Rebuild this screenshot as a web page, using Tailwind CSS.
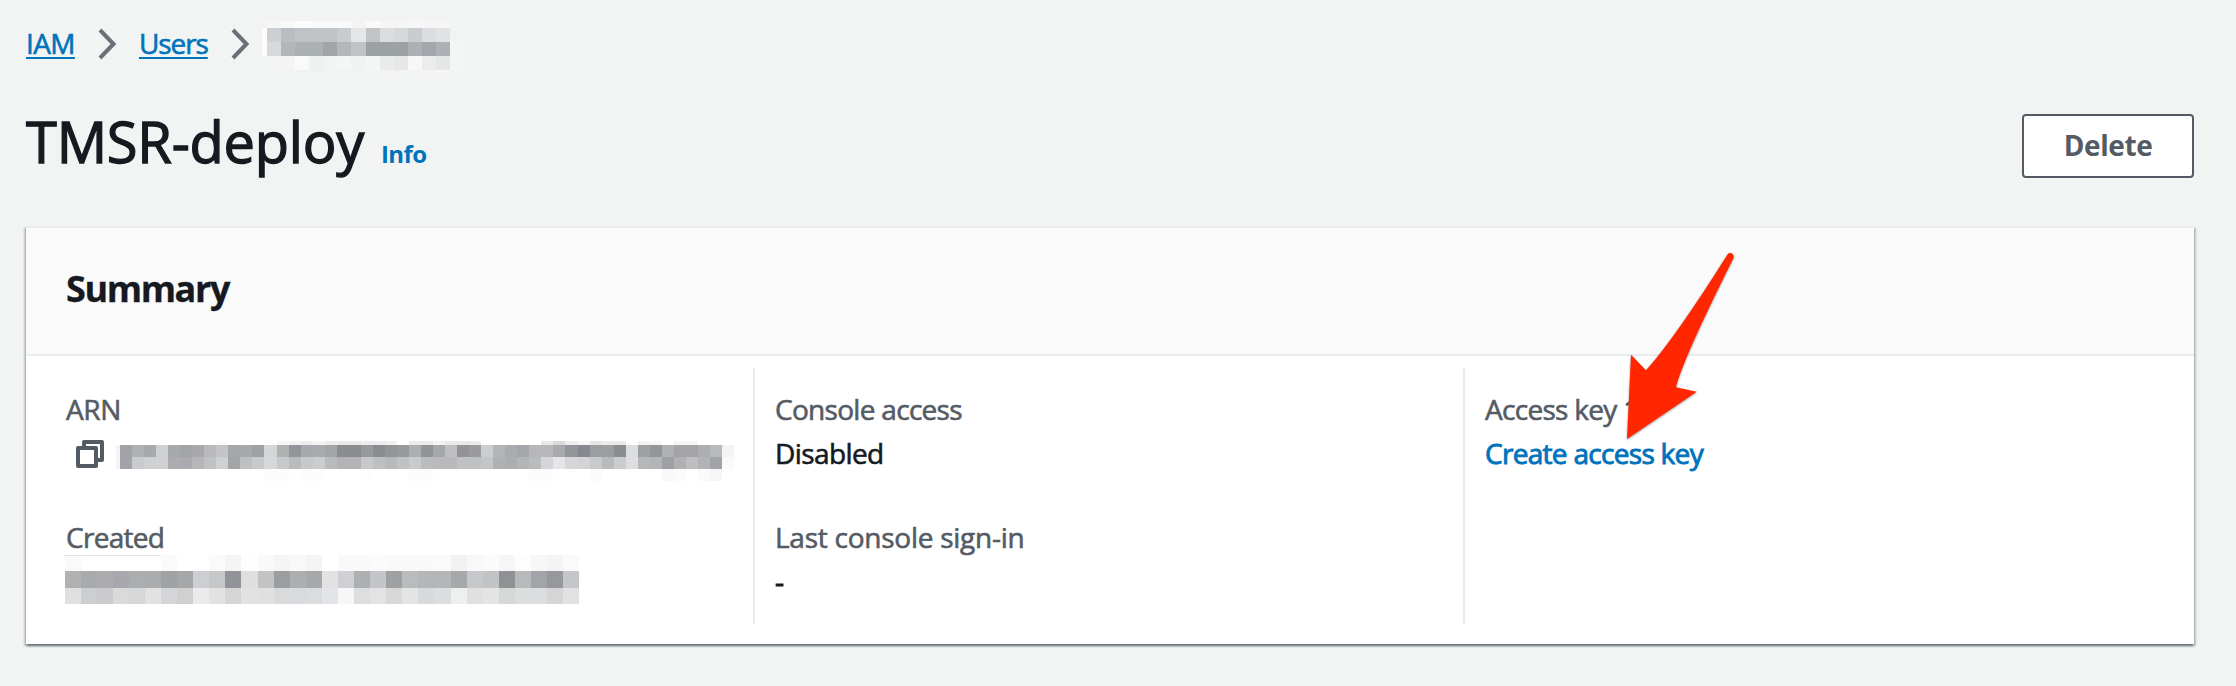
<!DOCTYPE html>
<html lang="en">
<head>
<meta charset="utf-8">
<title>IAM user</title>
<script src="https://cdn.jsdelivr.net/npm/@tailwindcss/browser@4"></script>
</head>
<body class="relative h-[686px] w-[2236px] overflow-hidden bg-[#f2f3f3] font-['Open_Sans','Noto_Sans',sans-serif] text-[28px] leading-[44px] text-[#16191f] [-webkit-text-stroke:0.6px]">
<nav class="flex h-[100px] items-start pl-[26px] pt-[15px]">
  <div class="flex h-[58px] items-center">
    <a class="w-[49px] whitespace-nowrap pb-[2px] tracking-[-0.6px] text-[#0073bb] underline decoration-2 underline-offset-[3px]">IAM</a>
    <svg class="ml-[23px] h-[32px] w-[20px]" viewBox="0 0 20 32" fill="none" stroke="#687078" stroke-width="4"><path d="M2 2 L15.500 16 L2 30"/></svg>
    <a class="ml-[21px] w-[69px] whitespace-nowrap pb-[2px] tracking-[-1.1px] text-[#0073bb] underline decoration-2 underline-offset-[3px]">Users</a>
    <svg class="ml-[23px] h-[32px] w-[20px]" viewBox="0 0 20 32" fill="none" stroke="#687078" stroke-width="4"><path d="M2 2 L15.500 16 L2 30"/></svg>
    <svg id="crumb" class="ml-[11px] h-[58px] w-[204px]" viewBox="262 15 204 58" shape-rendering="crispEdges"></svg>
  </div>
</nav>
<header class="flex h-[126px] items-start justify-between pl-[26px] pr-[42px]">
  <div class="flex items-baseline pt-px">
    <h1 class="w-[355px] whitespace-nowrap text-[56px] leading-[80px] tracking-[-0.2px] [-webkit-text-stroke:1.3px]">TMSR-deploy</h1>
    <a class="text-[24px] font-bold tracking-[-0.6px] text-[#0073bb] [-webkit-text-stroke:0px]">Info</a>
  </div>
  <button class="mt-[14px] h-[64px] w-[172px] rounded-[4px] border-2 border-[#545b64] bg-white pb-[2px] text-[28px] font-bold leading-[56px] tracking-[-0.4px] text-[#545b64] [-webkit-text-stroke:0px]">Delete</button>
</header>
<main class="ml-[26px] h-[418px] w-[2168px] border-t-2 border-[#eaeded] bg-white shadow-[0_2px_2px_0_rgba(0,28,36,0.4),2px_2px_2px_0_rgba(0,28,36,0.18),-2px_2px_2px_0_rgba(0,28,36,0.18)]">
  <div class="h-[128px] border-b-2 border-[#eaeded] bg-[#fafafa] pl-[40px] pt-[41px]">
    <h2 class="text-[36px] font-bold leading-[40px] tracking-[-1.4px] [-webkit-text-stroke:0.3px]">Summary</h2>
  </div>
  <div class="flex pt-[12px]">
    <section class="flex h-[256px] w-[727px] flex-col gap-[40px] pl-[38px] pt-[19px]">
      <div class="h-[88px]">
        <div class="pl-[2px] tracking-[-0.4px] text-[#545b64]">ARN</div>
        <div class="flex h-[44px] items-start">
          <svg class="ml-[12px] mt-[9px] h-[28px] w-[28px]" viewBox="0 0 28 28" fill="none" stroke="#545b64" stroke-width="4" stroke-linejoin="round"><path d="M8 6V2H26V20H22"/><rect x="2" y="8" width="18" height="18"/></svg>
          <svg id="arn" class="ml-[12px] h-[52px] w-[618px]" viewBox="116 431 618 52" shape-rendering="crispEdges"></svg>
        </div>
      </div>
      <div class="h-[88px]">
        <div class="h-[40px] pl-[2px] tracking-[-0.7px] text-[#545b64]">Created</div>
        <svg id="created" class="h-[50px] w-[520px]" viewBox="64 555 520 50" shape-rendering="crispEdges"></svg>
      </div>
    </section>
    <section class="flex h-[256px] w-[710px] flex-col gap-[40px] border-l-2 border-[#eaeded] pl-[20px] pt-[19px]">
      <div>
        <div class="tracking-[-0.7px] text-[#545b64]">Console access</div>
        <div class="tracking-[-0.6px]">Disabled</div>
      </div>
      <div>
        <div class="tracking-[-0.25px] text-[#545b64]">Last console sign-in</div>
        <div class="[-webkit-text-stroke:1px]">-</div>
      </div>
    </section>
    <section class="h-[256px] w-[731px] border-l-2 border-[#eaeded] pl-[20px] pt-[19px]">
      <div class="tracking-[-0.7px] text-[#545b64]">Access key 1</div>
      <a class="tracking-[-0.7px] text-[#0073bb] [-webkit-text-stroke:0.9px]">Create access key</a>
    </section>
  </div>
</main>
<svg class="absolute left-[1600px] top-[240px] h-[220px] w-[160px] drop-shadow-[0_1px_1px_rgba(0,0,0,0.4)]" viewBox="1600 240 160 220"><path fill="#ff2600" d="M1627 439 L1631 354.700 L1646 370.300 Q1675 338 1727.500 254.500 C1730 251 1735 254 1733.500 258 Q1682 361 1676 387.300 L1696.700 391.700 Z"/></svg>
<script>
// Draws a pixelated strip: x, y of the first cell, cell width, then rows of [height, colours].
function mosaic(id, x, y, w, rows) {
  let out = '';
  for (const [h, cells] of rows) {
    cells.trim().split(/\s+/).forEach((c, i) => {
      if (c !== '.') out += `<rect x="${Math.round(x + i * w)}" y="${y}" width="${Math.round(x + (i + 1) * w) - Math.round(x + i * w)}" height="${h}" fill="#${c}"/>`;
    });
    y += h;
  }
  document.getElementById(id).innerHTML += out;
}
document.getElementById('crumb').innerHTML = '<rect x="262" y="28" width="5" height="28" fill="#fcfcfc"/>';
mosaic('crumb', 267, 21, 14.08, [
  [7, 'f6f6f6 f9f9f9 fcfcfc fafafa f9f9f9 f9f9f9 f4f4f4 fafafa f6f6f6 f6f6f6 f7f7f7 f6f6f6 f6f6f6'],
  [14, 'cdd0d3 b9bcc0 c0c3c5 c0c3c5 c0c3c6 c9cccf e5e6e8 c1c5c7 dcdddf d6d9da cacdcf dcdde0 e1e2e4'],
  [14, 'd8d9db b4b6b9 acb1b3 acb1b3 a1a5a8 b3b7ba c0c3c5 9ca1a4 9ca1a4 9ca1a4 adb0b4 a3a6aa aeb0b5 f4f5f5'],
  [14, 'f3f4f4 f4f4f4 f9fbfa eff1f1 f2f3f4 f5f6f6 f1f2f2 f4f5f5 eaeceb e6e8e7 f7f7f7 ebecec e5e6e6 f4f5f5'],
  [9, '. . eff1f0 f1f2f2 . . . . f4f3f3 f1f2f2 . f5f4f4 f6f6f6']
]);
document.getElementById('arn').innerHTML = '<rect x="116" y="445" width="4" height="24" fill="#f4f4f4"/>';
mosaic('arn', 120, 441, 12.04, [
  [4, '. . . . . . . . fafcfb . . . . f5f5f5 f3f3f3 ededed f3f3f3 ededed eaeaea eaeaea ededed eaeced f0f0f0 . ebecec ebecec f3f3f3 eaeaea eaeaea ececec . . . . . e8e8e8 dadada eeeeee f6f6f6 e6e6e6 ebebeb ebebeb . f2f2f2 f6f6f6 . f6f6f6 f6f6f6'],
  [12, 'a2a3a6 b0b1b3 a8a9ab cfd0d2 a8a9ab a3a4a8 a8a9ab bababd c3c4c6 a6a7a9 a8a9ab a0a1a4 d5d7d7 b0b1b3 939499 a8a9ae a9aaad a4a5a8 8b8c90 8b8c90 98999d 8b8c90 949597 98999b adaeb0 929398 a6a7aa bebfc1 939396 9a9b9e cdced0 b4b5b7 a9abb0 a5a6a9 b6b7b9 b8b7ba a8a9ac 93959b 87888d 9c9da1 9c9da1 8c8d91 dcdddf 9fa0a3 949598 b0b1b3 a4a3a6 a4a4a7 aeafb1 b9babc f3f5f4'],
  [12, 'a2a3a9 cacbcd cfd0d2 d0d1d3 adacae aaaab0 b6b5b7 c0c1c3 cfd0d2 a4a5a7 bebfc1 c8c9cb d6d7d8 c8c9cb b9babc c7c8ca cbccce b9babc b4b4b7 b4b4b7 c7c8ca bebfc1 b8b9bb c0c1c3 c9cacc bbbcbe b9babc b9b8bb c0c1c3 bfc0c2 c4c5c7 b0b1b3 adaeb0 b3b4b6 babbbd d5d6d9 e4e5e7 d7d6d9 d3d4d6 c8c9cb b9babc cbccce dedddf b6b7b9 b4b5b7 9fa0a3 b0b1b3 bdbec0 b2b3b5 a2a3a6 fafafa'],
  [12, '. . . . . . . . . . . . fcfcfc fcfcfc . fcfcfc fcfcfc . . . fdfdfd . . . fcfcfc fcfcfc . . . . . . . . fcfcfc fcfcfc . . . fbfbfb . . . . . f8faf9 fbfbfb . fafafa f6f6f6']
]);
mosaic('created', 64.6, 555, 16.08, [
  [16, 'fafafa . . . . . fafafa . . fafafa f4f4f4 fefefe f9f9f9 f5f5f5 f8f8f8 f4f4f4 . f9f9f9 f9f9f9 fbfbfb f9f9f9 f9f9f9 f9f9f9 fafafa f2f2f2 f7f9f8 fbfbfb f6f6f6 fdfdfd f7f7f7 f4f4f4 fafafa'],
  [17, 'b0b1b3 a9aaac acabad a7a8ad acadaf abacad a1a2a3 a6a7a8 cdced1 c6c7c9 929398 dfdfe0 c2c3c5 9c9d9e adaeb0 a7a8aa e2e2e3 cfd0d3 aeafb1 c4c5c8 9fa0a2 babbbd b5b6b8 b5b6b8 a7a8aa c7c8cb c2c3c5 909194 b8b9bb a3a4a9 97989b c5c6c9'],
  [16, 'dfe0e2 cdced0 cbcacd dadadb d6d7d9 e2e2e3 d5d6d9 d0d0d1 ebebeb e2e2e3 d5d5d6 e2e2e3 e0e0e1 d9dadc d9dadd dbdcdd e3e4e7 f7f7f7 dddedf e3e3e3 d8d8d9 e3e5e4 d8d9dc dcddde eef0ef e0e0e1 e3e5e4 d6d8d7 dcdddd dcdde0 d5d5d6 e1e1e2']
]);
document.getElementById('created').innerHTML += '<rect x="64" y="555" width="97" height="1" fill="#e4e4e4"/>';
</script>
</body>
</html>
